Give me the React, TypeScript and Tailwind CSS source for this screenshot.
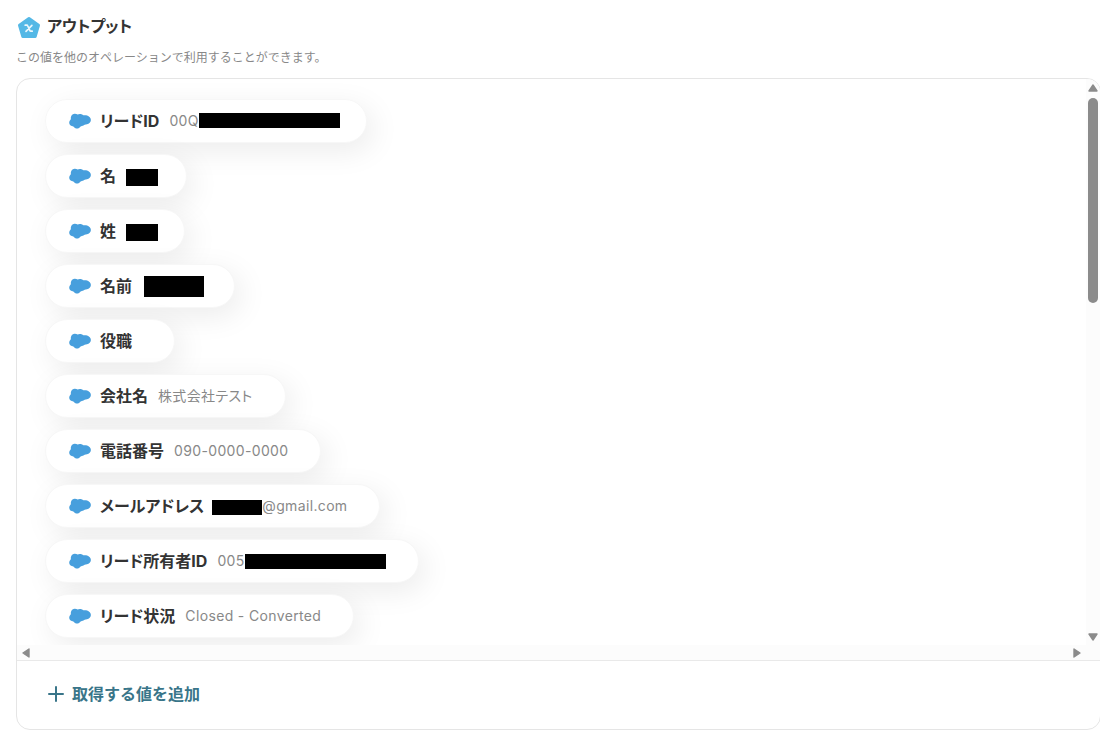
import React from "react";

type Field = { label: string; value?: React.ReactNode };

const fields: Field[] = [
  {
    label: "リードID",
    value: (
      <>
        00Q
        <Mask className="-mt-0.5 -mr-1.5 h-[15px] w-[141px]" />
      </>
    ),
  },
  { label: "名", value: <Mask className="mt-0.5 -mr-1 h-[17px] w-8" /> },
  { label: "姓", value: <Mask className="mt-0.5 -mr-1.5 h-[17px] w-8" /> },
  { label: "名前", value: <Mask className="ml-0.5 -mr-0.5 h-[21px] w-15" /> },
  { label: "役職", value: "" },
  { label: "会社名", value: "株式会社テスト" },
  { label: "電話番号", value: "090-0000-0000" },
  {
    label: "メールアドレス",
    value: (
      <>
        <Mask className="mt-0.5 -ml-0.5 h-[15px] w-[50px]" />
        @gmail.com
      </>
    ),
  },
  {
    label: "リード所有者ID",
    value: (
      <>
        005
        <Mask className="h-[15px] w-[141px]" />
      </>
    ),
  },
  { label: "リード状況", value: "Closed - Converted" },
];

function Mask({ className }: { className: string }) {
  return <span className={`block shrink-0 bg-black ${className}`} />;
}

function CloudIcon() {
  return (
    <svg viewBox="0 0 22 16" className="h-4 w-[22px] shrink-0" fill="#479fdd" aria-hidden="true">
      <path d="M2.200 3.200C2.800 1.500 4.200.6 5.900.7c1.100 0 2 .3 2.700.8.900-.5 2-.7 3.100-.5 1.100.1 2 .6 2.700 1.300 1.100-.2 2.500-.2 3.700.2 2.100.7 3.800 2.400 3.800 4.500 0 2.300-1.800 3.900-3.900 4.300-1 .2-1.700.2-2.300.5-.8.600-1.700 1-2.700 1.100-.7.200-1.200.4-1.700.8-.8 1-1.700 1.800-3.300 1.800-1.500 0-2.500-.8-3.300-1.800-.6-.3-1.300-.3-2-.6C1.200 12.600.2 11.300.2 9.600c0-1.100.5-2 1.300-2.800.5-.6.400-1.100.3-1.800 0-.6.100-1.200.4-1.800z" />
    </svg>
  );
}

function PentagonIcon() {
  return (
    <svg viewBox="0 0 24 24" className="size-6 shrink-0" aria-hidden="true">
      <path
        d="M12 2.500 21.500 9.300 18.200 20.500H5.800L2.500 9.300Z"
        fill="#54b8e6"
        stroke="#54b8e6"
        strokeWidth="3"
        strokeLinejoin="round"
      />
      <path
        d="M8.200 9.200h1.500c.6 0 .9.200 1.100.8l2 4.400c.2.600.6.800 1.100.8h1.300M14.900 9.300l-5.900 6"
        fill="none"
        stroke="#eaf7fd"
        strokeWidth="1.700"
        strokeLinecap="round"
        strokeLinejoin="round"
      />
    </svg>
  );
}

function Arrow({ className }: { className: string }) {
  return (
    <svg viewBox="0 0 10 8" className={`h-2 w-2.5 ${className}`} aria-hidden="true">
      <path d="M5 1 9 7H1Z" fill="#8b8b8b" stroke="#8b8b8b" strokeWidth="1.400" strokeLinejoin="round" />
    </svg>
  );
}

export default function App() {
  return (
    <main className="overflow-x-clip bg-white pt-4 pl-4 font-['Inter','Noto_Sans_CJK_JP',sans-serif] text-[#333]">
      <header>
        <div className="flex items-center gap-1.5 pl-px">
          <PentagonIcon />
          <h1 className="-mt-1 text-base leading-7 font-bold [font-feature-settings:'palt']">アウトプット</h1>
        </div>
        <p className="mt-2 text-xs leading-5 text-[#888]">
          この値を他のオペレーションで利用することができます。
        </p>
      </header>

      <section className="mt-2.5 -mr-px overflow-hidden rounded-[14px] border border-[#e5e5e5]">
        <div className="flex">
          <ul className="flex min-w-0 flex-1 flex-col items-start gap-[11px] overflow-hidden pt-5 pb-[7px] pl-7 [font-feature-settings:'palt']">
            {fields.map((field) => (
              <li
                key={field.label}
                className="flex h-11 items-center gap-2.5 rounded-full border border-[#f7f7f7] bg-white pr-8 pl-[23px] whitespace-nowrap shadow-[6px_8px_30px_rgba(0,0,0,0.08)]"
              >
                <CloudIcon />
                <span className="-ml-px pb-px text-base font-bold">{field.label}</span>
                <span className="flex items-center text-sm tracking-wide text-[#888]">{field.value}</span>
              </li>
            ))}
          </ul>
          <div className="flex w-3.5 flex-col items-center bg-[#fcfcfc] pt-[5px] pb-1">
            <Arrow className="" />
            <div className="mt-1.5 h-[205px] w-2.5 rounded-full bg-[#8b8b8b]" />
            <Arrow className="mt-auto rotate-180" />
          </div>
        </div>
        <div className="flex h-[15px] items-center justify-between bg-[#fcfcfc] pr-[18px] pl-1">
          <Arrow className="-rotate-90" />
          <Arrow className="rotate-90" />
        </div>
        <div className="border-t border-[#e9e9e9] px-[31px] pt-[19px] pb-[21px]">
          <button type="button" className="flex h-7 items-center gap-2 text-base font-bold text-[#397589]">
            <svg viewBox="0 0 16 16" className="size-4" aria-hidden="true">
              <path d="M8 1v14M1 8h14" stroke="currentColor" strokeWidth="2" strokeLinecap="round" />
            </svg>
            取得する値を追加
          </button>
        </div>
      </section>
    </main>
  );
}
